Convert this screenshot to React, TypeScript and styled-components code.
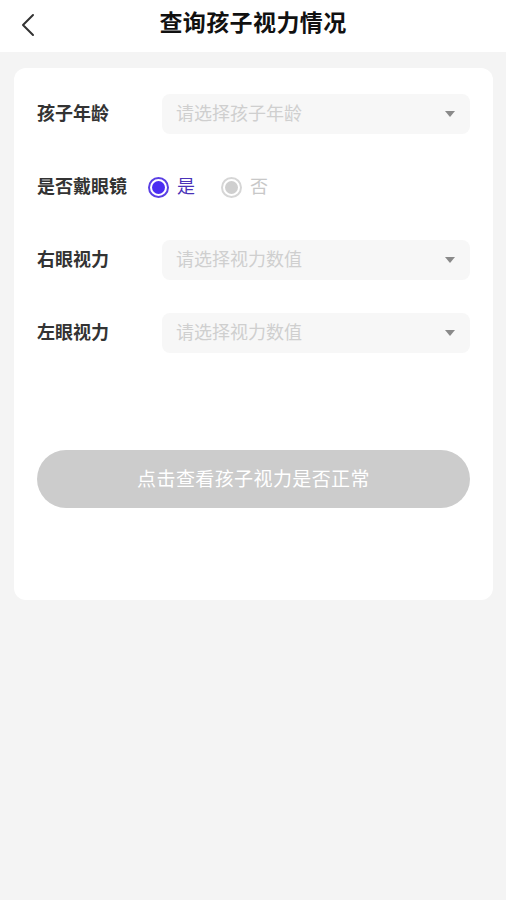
import React from "react";
import styled, { createGlobalStyle } from "styled-components";

const Global = createGlobalStyle`
  html, body { margin: 0; padding: 0; background: #f4f4f4; }
  body { font-family: "Noto Sans CJK SC", "Noto Sans", sans-serif; }
  * { box-sizing: border-box; }
`;

const Page = styled.div`
  width: 506px;
  min-height: 900px;
  background: #f4f4f4;
`;

const Header = styled.header`
  height: 52px;
  background: #ffffff;
  display: flex;
  align-items: center;
  justify-content: center;
  position: relative;
`;

const Back = styled.button`
  position: absolute;
  left: 14px;
  top: 10px;
  width: 28px;
  height: 30px;
  border: none;
  background: transparent;
  padding: 0;
  display: flex;
  align-items: center;
  justify-content: center;
`;

const Title = styled.h1`
  margin: 0;
  font-size: 23px;
  font-weight: 700;
  color: #111;
  letter-spacing: 0.4px;
  line-height: 1;
  padding-bottom: 10px;
`;

const Card = styled.section`
  margin: 16px 13px 0 14px;
  background: #ffffff;
  border-radius: 12px;
  padding: 26px 23px 92px 23px;
  height: 532px;
`;

const Form = styled.div`
  display: flex;
  flex-direction: column;
  gap: 33px;
`;

const Row = styled.div`
  display: flex;
  align-items: center;
  height: 40px;
`;

const Label = styled.div`
  width: 125px;
  font-size: 18px;
  font-weight: 700;
  color: #333;
  line-height: 1;
  padding-bottom: 4px;
`;

const Select = styled.div`
  flex: 1;
  height: 40px;
  background: #f7f7f7;
  border-radius: 8px;
  display: flex;
  align-items: center;
  justify-content: space-between;
  padding: 0 14px 0 14px;
`;

const Placeholder = styled.span`
  font-size: 18px;
  color: #cfcfcf;
  line-height: 1;
  padding-bottom: 4px;
`;

const Caret = styled.span`
  width: 0;
  height: 0;
  border-left: 5px solid transparent;
  border-right: 5px solid transparent;
  border-top: 6px solid #8a8a8a;
  margin-right: 1px;
`;

const RadioGroup = styled.div`
  display: flex;
  align-items: center;
  gap: 26px;
  margin-left: -14px;
`;

const RadioItem = styled.label<{ $on: boolean }>`
  display: flex;
  align-items: center;
  gap: 8px;
  font-size: 18px;
  line-height: 1;
  color: ${(p) => (p.$on ? "#4a32b8" : "#c8c8c8")};
`;

const RadioText = styled.span`
  padding-bottom: 4px;
`;

const Dot = styled.span<{ $on: boolean }>`
  width: 21px;
  height: 21px;
  border-radius: 50%;
  border: 2px solid ${(p) => (p.$on ? "#5a3fe4" : "#d6d6d6")};
  display: flex;
  align-items: center;
  justify-content: center;
  &::after {
    content: "";
    width: 13px;
    height: 13px;
    border-radius: 50%;
    background: ${(p) => (p.$on ? "#4b2cf2" : "#cfcfcf")};
  }
`;

const Submit = styled.button`
  margin-top: 97px;
  width: 100%;
  height: 58px;
  border: none;
  border-radius: 29px;
  background: #cccccc;
  color: #ffffff;
  font-family: "Noto Sans CJK SC", "Noto Sans", sans-serif;
  font-size: 19px;
  letter-spacing: 0.4px;
  padding-bottom: 4px;
`;

const fields = [
  { label: "孩子年龄", ph: "请选择孩子年龄" },
  { label: "右眼视力", ph: "请选择视力数值" },
  { label: "左眼视力", ph: "请选择视力数值" },
];

export default function App() {
  return (
    <Page>
      <Global />
      <Header>
        <Back aria-label="返回">
          <svg width="14" height="24" viewBox="0 0 14 24" fill="none">
            <path d="M12 2 L2 12 L12 22" stroke="#333" strokeWidth="2" strokeLinecap="round" strokeLinejoin="round" />
          </svg>
        </Back>
        <Title>查询孩子视力情况</Title>
      </Header>
      <Card>
        <Form>
          <Row>
            <Label>{fields[0].label}</Label>
            <Select>
              <Placeholder>{fields[0].ph}</Placeholder>
              <Caret />
            </Select>
          </Row>
          <Row>
            <Label>是否戴眼镜</Label>
            <RadioGroup>
              <RadioItem $on={true}>
                <Dot $on={true} />
                <RadioText>是</RadioText>
              </RadioItem>
              <RadioItem $on={false}>
                <Dot $on={false} />
                <RadioText>否</RadioText>
              </RadioItem>
            </RadioGroup>
          </Row>
          {fields.slice(1).map((f) => (
            <Row key={f.label}>
              <Label>{f.label}</Label>
              <Select>
                <Placeholder>{f.ph}</Placeholder>
                <Caret />
              </Select>
            </Row>
          ))}
        </Form>
        <Submit>点击查看孩子视力是否正常</Submit>
      </Card>
    </Page>
  );
}
